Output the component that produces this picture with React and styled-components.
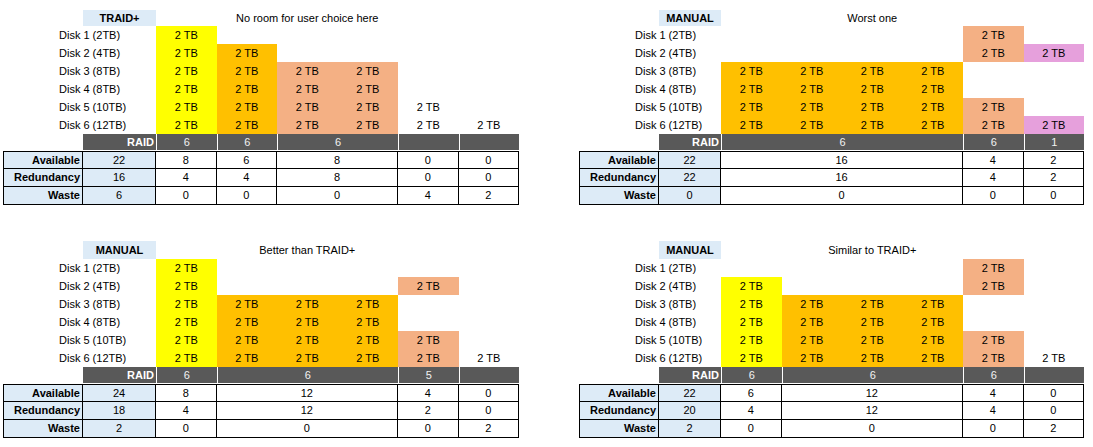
import React from 'react';
import styled, { createGlobalStyle } from 'styled-components';

const GlobalStyle = createGlobalStyle`
* {
    margin: 0;
    padding: 0;
    box-sizing: border-box;
}
body {
    background: #fff;
    color: #000;
    font-family: 'Liberation Sans', Arial, sans-serif;
    font-size: 11px;
}
`;

const fills = {
    y: '#ffff00',
    o: '#ffc000',
    s: '#f4b084',
    p: '#e6a0dc',
    w: 'transparent',
};

const Page = styled.div`
    display: grid;
    grid-template-columns: 576px 505px;
    grid-template-rows: auto auto;
    row-gap: 36px;
    padding: 10px 0 0 3px;
`;

const Table = styled.div`
    display: grid;
    grid-template-columns: 80px ${p => p.$bw}px repeat(6, 60.5px);
    grid-template-rows: ${p => p.$hh}px repeat(6, 18px) 17px repeat(3, 18px);
    align-self: start;
`;

const Blank = styled.div``;

const Tag = styled.div`
    background: #ddebf7;
    font-weight: bold;
    text-align: center;
    line-height: ${p => p.$hh}px;
`;

const Title = styled.div`
    grid-column: span 5;
    text-align: center;
    line-height: ${p => p.$hh}px;
`;

const DiskLabel = styled.div`
    grid-column: span 2;
    padding-left: 56px;
    line-height: 18px;
    white-space: nowrap;
`;

const Fill = styled.div`
    background: ${p => fills[p.$kind] || 'transparent'};
    text-align: center;
    line-height: 18px;
`;

const RaidLabel = styled.div`
    background: #595959;
    color: #fff;
    font-weight: bold;
    text-align: right;
    padding-right: 2px;
    line-height: 16px;
    border-bottom: 1px solid #fff;
`;

const RaidCell = styled.div`
    grid-column: span ${p => p.$span};
    background: #595959;
    color: #f2f2f2;
    text-align: center;
    line-height: 16px;
    border-left: 1px solid #fff;
    border-bottom: 1px solid #fff;
`;

const StatLabel = styled.div`
    background: #ddebf7;
    font-weight: bold;
    text-align: right;
    padding-right: 2px;
    border: 1px solid #000;
    border-top-width: ${p => (p.$first ? 1 : 0)}px;
    line-height: ${p => (p.$first ? 16 : 17)}px;
`;

const StatCell = styled.div`
    grid-column: span ${p => p.$span || 1};
    background: ${p => (p.$total ? '#ddebf7' : '#fff')};
    text-align: center;
    border-right: 1px solid #000;
    border-bottom: 1px solid #000;
    border-top: ${p => (p.$first ? '1px solid #000' : '0')};
    line-height: ${p => (p.$first ? 16 : 17)}px;
`;

const disks = ['Disk 1 (2TB)', 'Disk 2 (4TB)', 'Disk 3 (8TB)', 'Disk 4 (8TB)', 'Disk 5 (10TB)', 'Disk 6 (12TB)'];

const tables = [
    {
        tag: 'TRAID+',
        title: 'No room for user choice here',
        bw: 73,
        hh: 16,
        rows: ['y.....', 'yo....', 'yoss..', 'yoss..', 'yossw.', 'yossww'],
        totals: [22, 16, 6],
        groups: [
            { span: 1, raid: '6', v: [8, 4, 0] },
            { span: 1, raid: '6', v: [6, 4, 0] },
            { span: 2, raid: '6', v: [8, 8, 0] },
            { span: 1, raid: '', v: [0, 0, 4] },
            { span: 1, raid: '', v: [0, 0, 2] },
        ],
    },
    {
        tag: 'MANUAL',
        title: 'Worst one',
        bw: 62,
        hh: 16,
        rows: ['....s.', '....sp', 'oooo..', 'oooo..', 'oooos.', 'oooosp'],
        totals: [22, 22, 0],
        groups: [
            { span: 4, raid: '6', v: [16, 16, 0] },
            { span: 1, raid: '6', v: [4, 4, 0] },
            { span: 1, raid: '1', v: [2, 2, 0] },
        ],
    },
    {
        tag: 'MANUAL',
        title: 'Better than TRAID+',
        bw: 73,
        hh: 18,
        rows: ['y.....', 'y...s.', 'yooo..', 'yooo..', 'yooos.', 'yooosw'],
        totals: [24, 18, 2],
        groups: [
            { span: 1, raid: '6', v: [8, 4, 0] },
            { span: 3, raid: '6', v: [12, 12, 0] },
            { span: 1, raid: '5', v: [4, 2, 0] },
            { span: 1, raid: '', v: [0, 0, 2] },
        ],
    },
    {
        tag: 'MANUAL',
        title: 'Similar to TRAID+',
        bw: 62,
        hh: 18,
        rows: ['....s.', 'y...s.', 'yooo..', 'yooo..', 'yooos.', 'yooosw'],
        totals: [22, 20, 2],
        groups: [
            { span: 1, raid: '6', v: [6, 4, 0] },
            { span: 3, raid: '6', v: [12, 12, 0] },
            { span: 1, raid: '6', v: [4, 4, 0] },
            { span: 1, raid: '', v: [0, 0, 2] },
        ],
    },
];

const statNames = ['Available', 'Redundancy', 'Waste'];

const RaidTable = ({ t }) => (
    <Table $bw={t.bw} $hh={t.hh}>
        <Blank />
        <Tag $hh={t.hh}>{t.tag}</Tag>
        <Title $hh={t.hh}>{t.title}</Title>
        <Blank />

        {t.rows.map((row, r) => (
            <React.Fragment key={r}>
                <DiskLabel>{disks[r]}</DiskLabel>
                {row.split('').map((k, c) => (
                    <Fill key={c} $kind={k}>{k !== '.' ? '2 TB' : ''}</Fill>
                ))}
            </React.Fragment>
        ))}

        <Blank />
        <RaidLabel>RAID</RaidLabel>
        {t.groups.map((g, i) => (
            <RaidCell key={i} $span={g.span}>{g.raid}</RaidCell>
        ))}

        {statNames.map((name, s) => (
            <React.Fragment key={name}>
                <StatLabel $first={s === 0}>{name}</StatLabel>
                <StatCell $first={s === 0} $total>{t.totals[s]}</StatCell>
                {t.groups.map((g, i) => (
                    <StatCell key={i} $first={s === 0} $span={g.span}>{g.v[s]}</StatCell>
                ))}
            </React.Fragment>
        ))}
    </Table>
);

const App = () => {
    return (
        <>
            <GlobalStyle />
            <Page>
                {tables.map((t, i) => (
                    <RaidTable key={i} t={t} />
                ))}
            </Page>
        </>
    );
};

export default App;
